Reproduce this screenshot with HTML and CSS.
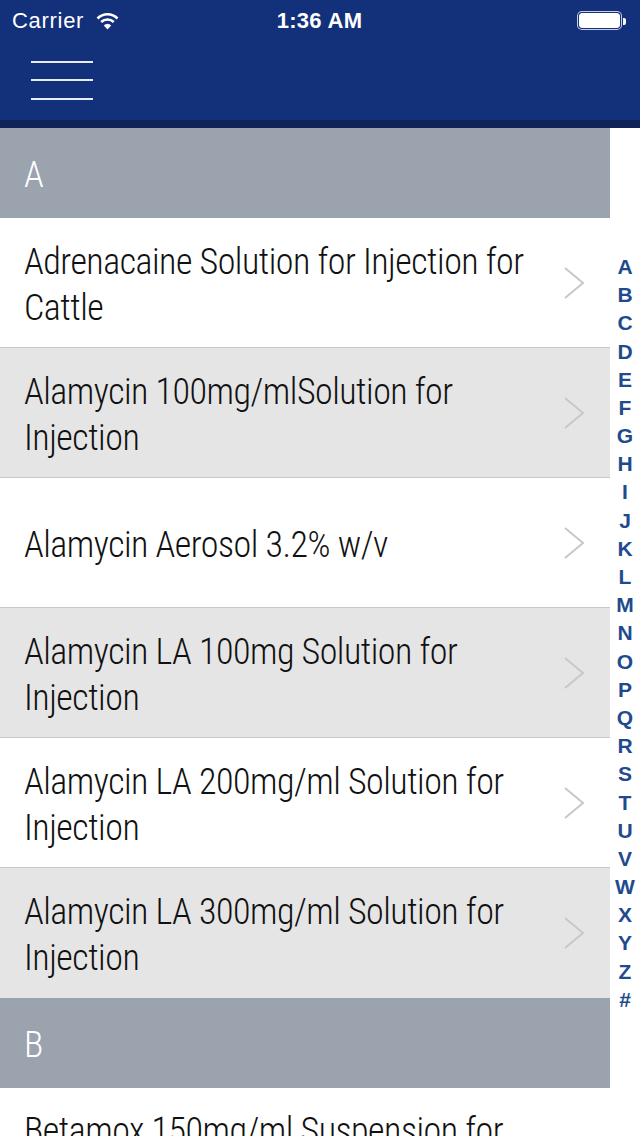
FILE: index.html
```html
<!DOCTYPE html>
<html>
<head>
<meta charset="UTF-8">
<title>Products A-Z</title>
<link rel="stylesheet" href="styles.css">
</head>
<body>

<div class="screen">
  <header class="topbar">
    <div class="status">
      <div class="status-left">
        <span class="carrier">Carrier</span>
        <svg class="wifi" width="23" height="18" viewBox="0 0 23 18">
          <path d="M1.5 6.5 A14 14 0 0 1 21.5 6.5" fill="none" stroke="#fff" stroke-width="2.6"/>
          <path d="M5.2 10 A9 9 0 0 1 17.8 10" fill="none" stroke="#fff" stroke-width="2.6"/>
          <path d="M11.5 17.5 L7.8 13.4 A5.2 5.2 0 0 1 15.2 13.4 Z" fill="#fff"/>
        </svg>
      </div>
      <span class="clock">1:36 AM</span>
      <div class="battery"><span class="battery-level"></span></div>
    </div>
    <nav class="navbar">
      <button class="menu-btn" aria-label="Menu">
        <span></span><span></span><span></span>
      </button>
    </nav>
  </header>

  <div class="content">
    <div class="list">
      <div class="section-head">A</div>
      <ul class="rows">
        <li class="row"><span class="title">Adrenacaine Solution for Injection for Cattle</span><svg class="chev" width="20" height="32" viewBox="0 0 20 32"><polyline points="1,1 19,16 1,31"/></svg></li>
        <li class="row"><span class="title">Alamycin 100mg/mlSolution for Injection</span><svg class="chev" width="20" height="32" viewBox="0 0 20 32"><polyline points="1,1 19,16 1,31"/></svg></li>
        <li class="row"><span class="title">Alamycin Aerosol 3.2% w/v</span><svg class="chev" width="20" height="32" viewBox="0 0 20 32"><polyline points="1,1 19,16 1,31"/></svg></li>
        <li class="row"><span class="title">Alamycin LA 100mg Solution for Injection</span><svg class="chev" width="20" height="32" viewBox="0 0 20 32"><polyline points="1,1 19,16 1,31"/></svg></li>
        <li class="row"><span class="title">Alamycin LA 200mg/ml Solution for Injection</span><svg class="chev" width="20" height="32" viewBox="0 0 20 32"><polyline points="1,1 19,16 1,31"/></svg></li>
        <li class="row"><span class="title">Alamycin LA 300mg/ml Solution for Injection</span><svg class="chev" width="20" height="32" viewBox="0 0 20 32"><polyline points="1,1 19,16 1,31"/></svg></li>
      </ul>
      <div class="section-head">B</div>
      <ul class="rows">
        <li class="row row-tall"><span class="title">Betamox 150mg/ml Suspension for Injection for Cattle, Sheep and Pigs</span><svg class="chev" width="20" height="32" viewBox="0 0 20 32"><polyline points="1,1 19,16 1,31"/></svg></li>
      </ul>
    </div>

    <ol class="index" id="index"></ol>
  </div>
</div>

<script>
var letters = "ABCDEFGHIJKLMNOPQRSTUVWXYZ#".split("");
var index = document.getElementById("index");
for (var i = 0; i < letters.length; i++) {
  var li = document.createElement("li");
  li.textContent = letters[i];
  index.appendChild(li);
}
</script>

</body>
</html>
```

FILE: styles.css
```css
  html, body {
    margin: 0;
    padding: 0;
  }
  body {
    width: 640px;
    height: 1136px;
    overflow: hidden;
    background: #fff;
    font-family: "Roboto Condensed", "Liberation Sans Narrow", "Roboto", sans-serif;
  }
  .screen {
    display: flex;
    flex-direction: column;
    height: 1136px;
  }

  /* top bar */
  .topbar {
    background-color: #13307a;
    border-bottom: 8px solid #0f2359;
  }
  .status {
    box-sizing: border-box;
    height: 40px;
    display: flex;
    align-items: center;
    justify-content: space-between;
    padding: 1px 13px 0 12px;
    color: #fff;
    font-family: "Liberation Sans", Arial, sans-serif;
    font-size: 22px;
  }
  .status-left {
    display: flex;
    align-items: center;
    gap: 12px;
    width: 150px;
  }
  .carrier {
    letter-spacing: 0.7px;
  }
  .clock {
    font-weight: bold;
    letter-spacing: 0.3px;
  }
  .battery {
    width: 150px;
    display: flex;
    justify-content: flex-end;
    align-items: center;
  }
  .battery-level {
    display: block;
    width: 39px;
    height: 13px;
    background: #fff;
    border: 1px solid #fff;
    box-shadow: 0 0 0 1px #13307a, 0 0 0 2px #c9d0e0;
    border-radius: 3px;
    margin-right: 7px;
    position: relative;
  }
  .battery-level::after {
    content: "";
    position: absolute;
    right: -7px;
    top: 4px;
    width: 3px;
    height: 7px;
    background: #fff;
    border-radius: 0 2px 2px 0;
  }
  .navbar {
    height: 80px;
    display: flex;
    align-items: center;
    padding-left: 31px;
  }
  .menu-btn {
    background: none;
    border: none;
    padding: 0;
    width: 62px;
    display: flex;
    flex-direction: column;
    gap: 16.5px;
    cursor: pointer;
  }
  .menu-btn span {
    display: block;
    height: 2px;
    background: #e8ecf5;
  }

  /* list */
  .content {
    flex: 1;
    display: flex;
    min-height: 0;
  }
  .list {
    width: 610px;
    flex: none;
  }
  .section-head {
    box-sizing: border-box;
    height: 90px;
    display: flex;
    align-items: center;
    padding: 3px 0 0 24px;
    background-color: #9aa3ae;
    color: #fff;
    font-size: 36px;
    font-weight: 300;
    font-stretch: condensed;
  }
  .rows {
    list-style: none;
    margin: 0;
    padding: 0;
  }
  .row {
    box-sizing: border-box;
    height: 130px;
    display: flex;
    align-items: center;
    padding: 0 26px 0 24px;
    border-bottom: 1px solid #c8c8cc;
    background: #fff;
  }
  .row:nth-child(even) {
    background-color: #e5e5e5;
  }
  .row:last-child {
    border-bottom: none;
  }
  .row-tall {
    align-items: flex-start;
    padding-top: 16px;
  }
  .title {
    flex: 1;
    padding: 4px 10px 0 0;
    font-size: 36px;
    line-height: 46px;
    letter-spacing: -0.5px;
    font-weight: 300;
    font-stretch: condensed;
    color: #111;
  }
  .chev {
    flex: none;
    fill: none;
    stroke: #c7c7cc;
    stroke-width: 2;
  }
  .row-tall .chev {
    margin-top: 50px;
  }

  /* side index */
  .index {
    flex: 1;
    list-style: none;
    margin: 0;
    padding: 3px 0 0 0;
    display: flex;
    flex-direction: column;
    justify-content: center;
    align-items: center;
    font-family: "Liberation Sans", Arial, sans-serif;
    font-weight: bold;
    font-size: 21px;
    color: #1f4b8e;
  }
  .index li {
    height: 28.2px;
    line-height: 28.2px;
  }
```
